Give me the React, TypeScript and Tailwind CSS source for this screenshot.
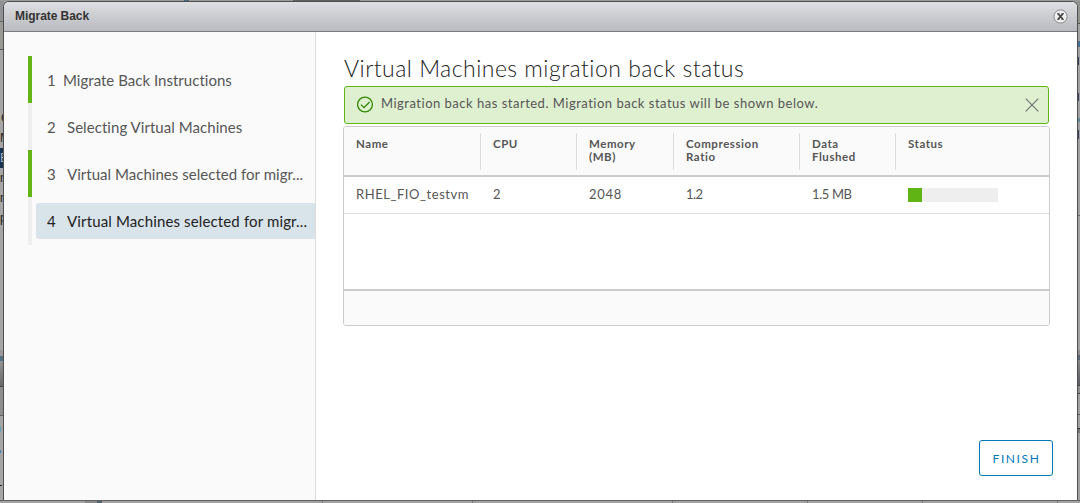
import React from "react";

type Step = { n: number; label: string; done: boolean; active?: boolean; cls: string; gap: string };

const steps: Step[] = [
  { n: 1, label: "Migrate Back Instructions", done: true, cls: "tracking-[0.02px]", gap: "w-[16px]" },
  { n: 2, label: "Selecting Virtual Machines", done: false, cls: "tracking-[0.05px]", gap: "w-[20px]" },
  { n: 3, label: "Virtual Machines selected for migr...", done: true, cls: "tracking-[0.03px]", gap: "w-[20px]" },
  { n: 4, label: "Virtual Machines selected for migr...", done: false, active: true, cls: "tracking-[0.14px]", gap: "w-[20px]" },
];

type Column = { head: string; value: string; cls: string };

const columns: Column[] = [
  { head: "Name", value: "RHEL_FIO_testvm", cls: "tracking-[0.55px]" },
  { head: "CPU", value: "2", cls: "" },
  { head: "Memory\n(MB)", value: "2048", cls: "tracking-[0.7px]" },
  { head: "Compression\nRatio", value: "1.2", cls: "tracking-[-0.6px]" },
  { head: "Data\nFlushed", value: "1.5 MB", cls: "tracking-[-0.4px]" },
];

const grid = "grid grid-cols-[137px_96px_97px_126px_96px_1fr]";

function Sidebar() {
  return (
    <nav className="flex w-[312px] shrink-0 flex-col border-r border-[#dddddd] bg-[#fafafa] pt-[24px] pl-[24px]">
      {steps.map((s) => (
        <div key={s.n} className={`flex ${s.n === 4 ? "h-[48px]" : "h-[47px]"}`}>
          <div className={`w-1 shrink-0 ${s.done ? "bg-[#62b515]" : "bg-[#eeeeee]"}`} />
          <div
            className={`mt-[6px] ml-1 flex h-[36px] min-w-0 flex-1 items-center rounded-l-[3px] pt-px pl-[11px] text-[15px] whitespace-nowrap ${
              s.active ? "bg-[#d9e4ea] text-[#222222]" : "text-[#565656]"
            }`}
          >
            <span className={`shrink-0 ${s.gap}`}>{s.n}</span>
            <span className={s.cls}>{s.label}</span>
          </div>
        </div>
      ))}
    </nav>
  );
}

function Alert() {
  return (
    <div className="mx-px flex h-[38px] items-center rounded-[3px] border border-[#60b515] bg-[#dff0d0] pr-[9px] pl-[12px]">
      <svg className="mb-[2px]" width="17" height="17" viewBox="0 0 17 17" fill="none" stroke="#318700" strokeWidth="1.3">
        <circle cx="8" cy="8.5" r="7.4" />
        <path d="M4 8.6l3 3 5.6-5.6" />
      </svg>
      <span className="ml-[7px] pb-[2px] text-[13px] tracking-[0.5px] whitespace-nowrap text-[#565656]">
        Migration back has started. Migration back status will be shown below.
      </span>
      <svg className="ml-auto" width="14" height="14" viewBox="0 0 14 14" fill="none" stroke="#737373" strokeWidth="1.2">
        <path d="M.7.7l12.6 12.6M13.3.7L.7 13.3" />
      </svg>
    </div>
  );
}

function DataGrid() {
  return (
    <div className="mt-[2px] flex h-[200px] flex-col overflow-hidden rounded-[3px] border border-[#cccccc] bg-white">
      <div className={`${grid} h-[50px] shrink-0 border-b-2 border-[#cccccc] bg-[#fafafa] pt-[6px]`}>
        {columns.map((c) => (
          <div
            key={c.head}
            className="h-[37px] border-r border-[#dddddd] pt-[4px] pl-[12px] text-[11.5px] leading-[13px] font-bold tracking-[0.55px] whitespace-pre text-[#565656]"
          >
            {c.head}
          </div>
        ))}
        <div className="pt-[4px] pl-[12px] text-[11.5px] leading-[13px] font-bold tracking-[0.55px] text-[#565656]">
          Status
        </div>
      </div>
      <div className={`${grid} h-[37px] shrink-0 items-center border-b border-[#dddddd] text-[13px] text-[#565656]`}>
        {columns.map((c) => (
          <span key={c.head} className={`pl-[12px] whitespace-nowrap ${c.cls}`}>{c.value}</span>
        ))}
        <div className="ml-[12px] h-[14px] w-[90px] bg-[#eeeeee]">
          <div className="h-full w-[14px] bg-[#60b515]" />
        </div>
      </div>
      <div className="flex-1" />
      <div className="h-[36px] shrink-0 border-t-2 border-[#cccccc] bg-[#fafafa]" />
    </div>
  );
}

function LeftBackdrop() {
  return (
    <div className="flex w-[3px] shrink-0 flex-col overflow-hidden bg-[#a6a6a6] font-['Liberation_Sans'] text-[12px] leading-[20px] whitespace-nowrap text-[#222222]">
      <div className="h-[21px] shrink-0 border-b border-[#646464] bg-[#8f9294]" />
      <div className="h-[28px] shrink-0 border-b border-[#555555] bg-[#9a9996]" />
      <div className="h-[58px] shrink-0" />
      <div className="h-[20px] shrink-0 pl-px">C</div>
      <div className="h-[20px] shrink-0">M</div>
      <div className="h-[20px] shrink-0 bg-[#18324f] text-[#a6b3bd]">E</div>
      <div className="h-[20px] shrink-0">m</div>
      <div className="h-[20px] shrink-0">n</div>
      <div className="h-[20px] shrink-0">p</div>
      <div className="h-[122px] shrink-0" />
      <div className="h-[6px] shrink-0 bg-[#999999]" />
      <div className="h-[5px] shrink-0 bg-[#56717f]" />
      <div className="h-[26px] shrink-0 border-b border-[#444444] bg-gradient-to-b from-[#949494] to-[#686868]" />
      <div className="h-[29px] shrink-0 border-b border-[#606060] bg-[#8e8e8e]" />
      <div className="h-[10px] shrink-0" />
      <div className="h-[6px] w-px shrink-0 bg-[#65a3b3]" />
      <div className="h-[18px] shrink-0" />
      <div className="h-[3px] w-px shrink-0 bg-[#3d80ad]" />
      <div className="h-[32px] shrink-0" />
      <div className="h-px w-[2px] shrink-0 bg-[#222222]" />
    </div>
  );
}

function RightBackdrop() {
  return (
    <div className="flex w-[2px] shrink-0 flex-col overflow-hidden bg-[#a2a2a2]">
      <div className="h-[23px] shrink-0 border-b border-[#555555] bg-[#92928f]" />
      <div className="h-[17px] shrink-0" />
      <div className="h-[6px] shrink-0 bg-[#476e8e]" />
      <div className="h-[10px] shrink-0" />
      <div className="h-[8px] w-px shrink-0 bg-[#354062]" />
      <div className="h-[28px] shrink-0" />
      <div className="h-[8px] w-px shrink-0 bg-[#354062]" />
      <div className="h-[17px] shrink-0" />
      <div className="h-[4px] shrink-0 bg-[#648996]" />
      <div className="h-[8px] shrink-0" />
      <div className="h-[9px] w-px shrink-0 bg-[#354062]" />
      <div className="h-[76px] shrink-0" />
      <div className="h-px shrink-0 bg-[#666666]" />
      <div className="h-[134px] shrink-0" />
      <div className="h-[5px] shrink-0 bg-[#8d8d8d]" />
      <div className="h-[5px] shrink-0 bg-[#5a6678]" />
      <div className="h-[26px] shrink-0 border-b border-[#444444] bg-gradient-to-b from-[#88888a] to-[#5e5e63]" />
      <div className="h-[8px] shrink-0 border-b border-[#444444] bg-[#909093]" />
      <div className="h-[21px] shrink-0 border-b border-[#555555]" />
      <div className="h-[14px] shrink-0 border-b border-[#333333]" />
      <div className="h-[4px] shrink-0 bg-[#777777]" />
    </div>
  );
}

export default function App() {
  return (
    <div className="flex h-[503px] w-[1080px] flex-col overflow-hidden bg-[#999b9b] font-['Lato','Liberation_Sans',sans-serif]">
      <div className="flex h-px shrink-0">
        <div className="w-[184px]" />
        <div className="w-[5px] bg-[#42697a]" />
        <div className="w-[104px]" />
        <div className="w-[67px] bg-[#5e605e]" />
      </div>
      <div className="flex h-[499px] shrink-0">
        <LeftBackdrop />
        <div className="flex w-[1075px] flex-col overflow-hidden rounded-t-[6px] border border-b-0 border-[#4f4f4f] bg-white">
          <header className="flex h-[30px] shrink-0 items-center justify-between border-b border-[#797b80] bg-gradient-to-b from-[#dedfe2] to-[#b9babf] pr-[9px] pb-px pl-[11px]">
            <h1 className="font-['Liberation_Sans',sans-serif] text-[12px] font-bold tracking-[-0.05px] text-[#333333]">
              Migrate Back
            </h1>
            <svg width="15" height="15" viewBox="0 0 15 15">
              <circle cx="7.5" cy="7.5" r="6.6" fill="#eeeeee" stroke="#8b8b8d" />
              <path d="M5.3 5l4.4 5M9.7 5l-4.4 5" stroke="#444444" strokeWidth="1.8" />
              <path d="M4 4.7h2.5M8.5 4.7H11M4 10.3h2.5M8.5 10.3H11" stroke="#444444" strokeWidth="1" />
            </svg>
          </header>
          <div className="flex min-h-0 flex-1">
            <Sidebar />
            <main className="flex min-w-0 flex-1 flex-col pr-[27px] pl-[27px]">
              <h2 className="mt-[20px] h-[34px] pl-px text-[23px] leading-[32px] font-light tracking-[0.48px] whitespace-nowrap text-[#222222]">
                Virtual Machines migration back status
              </h2>
              <Alert />
              <DataGrid />
              <button className="mt-[114px] -mr-[3px] h-[36px] w-[74px] self-end rounded-[3px] border border-[#0079b8] pt-px pl-px text-[12px] tracking-[1.6px] text-[#0079b8]">
                FINISH
              </button>
            </main>
          </div>
        </div>
        <RightBackdrop />
      </div>
      <div className="flex h-[3px] shrink-0 border-t border-[#626262] bg-[#a2a2a2]">
        <div className="w-[85px]" />
        <div className="w-[12px] bg-[#888888]" />
        <div className="w-[5px] bg-[#4c6472]" />
        <div className="w-[221px] border-r border-[#777777]" />
        <div className="w-[150px] border-r border-[#777777]" />
        <div className="w-[200px] border-r border-[#777777]" />
        <div className="w-[135px] border-r border-[#777777]" />
        <div className="w-[115px] border-r border-[#777777]" />
        <div className="w-[135px] border-r border-[#777777]" />
      </div>
    </div>
  );
}
